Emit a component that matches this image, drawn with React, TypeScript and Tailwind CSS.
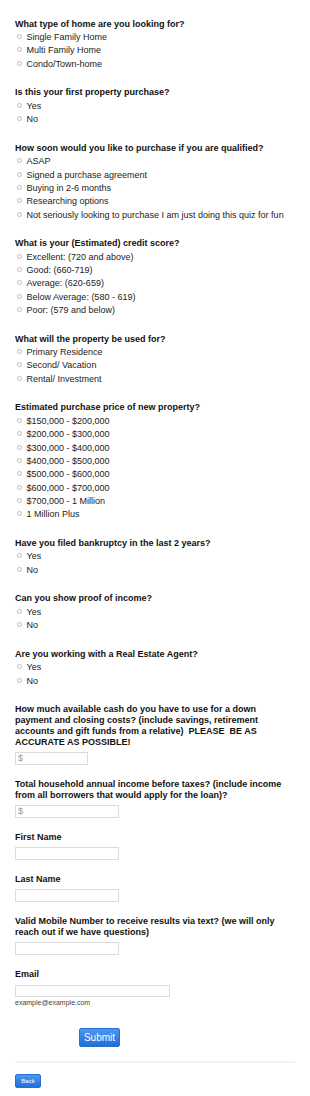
const questions: { title: string; options: string[] }[] = [
  {
    title: 'What type of home are you looking for?',
    options: ['Single Family Home', 'Multi Family Home', 'Condo/Town-home'],
  },
  { title: 'Is this your first property purchase?', options: ['Yes', 'No'] },
  {
    title: 'How soon would you like to purchase if you are qualified?',
    options: [
      'ASAP',
      'Signed a purchase agreement',
      'Buying in 2-6 months',
      'Researching options',
      'Not seriously looking to purchase I am just doing this quiz for fun',
    ],
  },
  {
    title: 'What is your (Estimated) credit score?',
    options: [
      'Excellent: (720 and above)',
      'Good: (660-719)',
      'Average: (620-659)',
      'Below Average: (580 - 619)',
      'Poor: (579 and below)',
    ],
  },
  {
    title: 'What will the property be used for?',
    options: ['Primary Residence', 'Second/ Vacation', 'Rental/ Investment'],
  },
  {
    title: 'Estimated purchase price of new property?',
    options: [
      '$150,000 - $200,000',
      '$200,000 - $300,000',
      '$300,000 - $400,000',
      '$400,000 - $500,000',
      '$500,000 - $600,000',
      '$600,000 - $700,000',
      '$700,000 - 1 Million',
      '1 Million Plus',
    ],
  },
  { title: 'Have you filed bankruptcy in the last 2 years?', options: ['Yes', 'No'] },
  { title: 'Can you show proof of income?', options: ['Yes', 'No'] },
  { title: 'Are you working with a Real Estate Agent?', options: ['Yes', 'No'] },
]

function RadioQuestion({ title, options }: { title: string; options: string[] }) {
  return (
    <div className="mb-[16.3px]">
      <p className="font-bold leading-[11px] text-[#111]">{title}</p>
      <div className="mt-[1.5px]">
        {options.map((opt) => (
          <label key={opt} className="flex h-[13.33px] items-start text-[#222]">
            <span className="mt-[3px] ml-[2px] h-[5px] w-[5px] shrink-0 rounded-full border border-[#bdbdbd] bg-white" />
            <span className="ml-[4.5px] leading-[13.33px]">{opt}</span>
          </label>
        ))}
      </div>
    </div>
  )
}

function TextField({
  label,
  width,
  placeholder,
}: {
  label: string
  width: string
  placeholder?: string
}) {
  return (
    <div className="mb-[14.5px]">
      <p className="whitespace-pre-wrap font-bold leading-[11px] text-[#111]">{label}</p>
      <div
        className={`mt-[3.8px] h-[12.7px] border border-[#dcdcdc] bg-white pl-[2px] text-[9px] leading-[11px] text-[#999] ${width}`}
      >
        {placeholder}
      </div>
    </div>
  )
}

export default function App() {
  return (
    <div
      className="min-h-[1096px] bg-white px-[15px] pt-[18.5px] text-[9px]"
      style={{ fontFamily: '"Liberation Sans", Arial, sans-serif' }}
    >
      <div className="w-[280px]">
        {questions.map((q) => (
          <RadioQuestion key={q.title} title={q.title} options={q.options} />
        ))}

        <TextField
          label="How much available cash do you have to use for a down payment and closing costs? (include savings, retirement accounts and gift funds from a relative)  PLEASE  BE AS ACCURATE AS POSSIBLE!"
          width="w-[73px]"
          placeholder="$"
        />
        <TextField
          label="Total household annual income before taxes? (include income from all borrowers that would apply for the loan)?"
          width="w-[104px]"
          placeholder="$"
        />
        <TextField label="First Name" width="w-[104px]" />
        <TextField label="Last Name" width="w-[104px]" />
        <TextField
          label="Valid Mobile Number to receive results via text? (we will only reach out if we have questions)"
          width="w-[104px]"
        />

        <div>
          <p className="font-bold leading-[11px] text-[#111]">Email</p>
          <div className="mt-[4.5px] h-[12.7px] w-[155px] border border-[#dcdcdc] bg-white" />
          <p className="mt-[1.5px] text-[7px] leading-[8px] text-[#444]">example@example.com</p>
        </div>

        <div className="mt-[21.5px] pl-[64px]">
          <button className="h-[18.5px] w-[41px] rounded-[2px] border border-[#2a6fcf] bg-gradient-to-b from-[#4b97f0] to-[#1f6fdc] text-[10px] leading-[16px] text-white">
            Submit
          </button>
        </div>

        <div className="mt-[14.5px] h-[2px] bg-[#f2f2f2]" />

        <button className="mt-[10.5px] h-[14px] w-[26px] rounded-[2px] border border-[#2a6fcf] bg-gradient-to-b from-[#4b97f0] to-[#1f6fdc] text-[6px] leading-[12px] text-white">
          Back
        </button>
      </div>
    </div>
  )
}
